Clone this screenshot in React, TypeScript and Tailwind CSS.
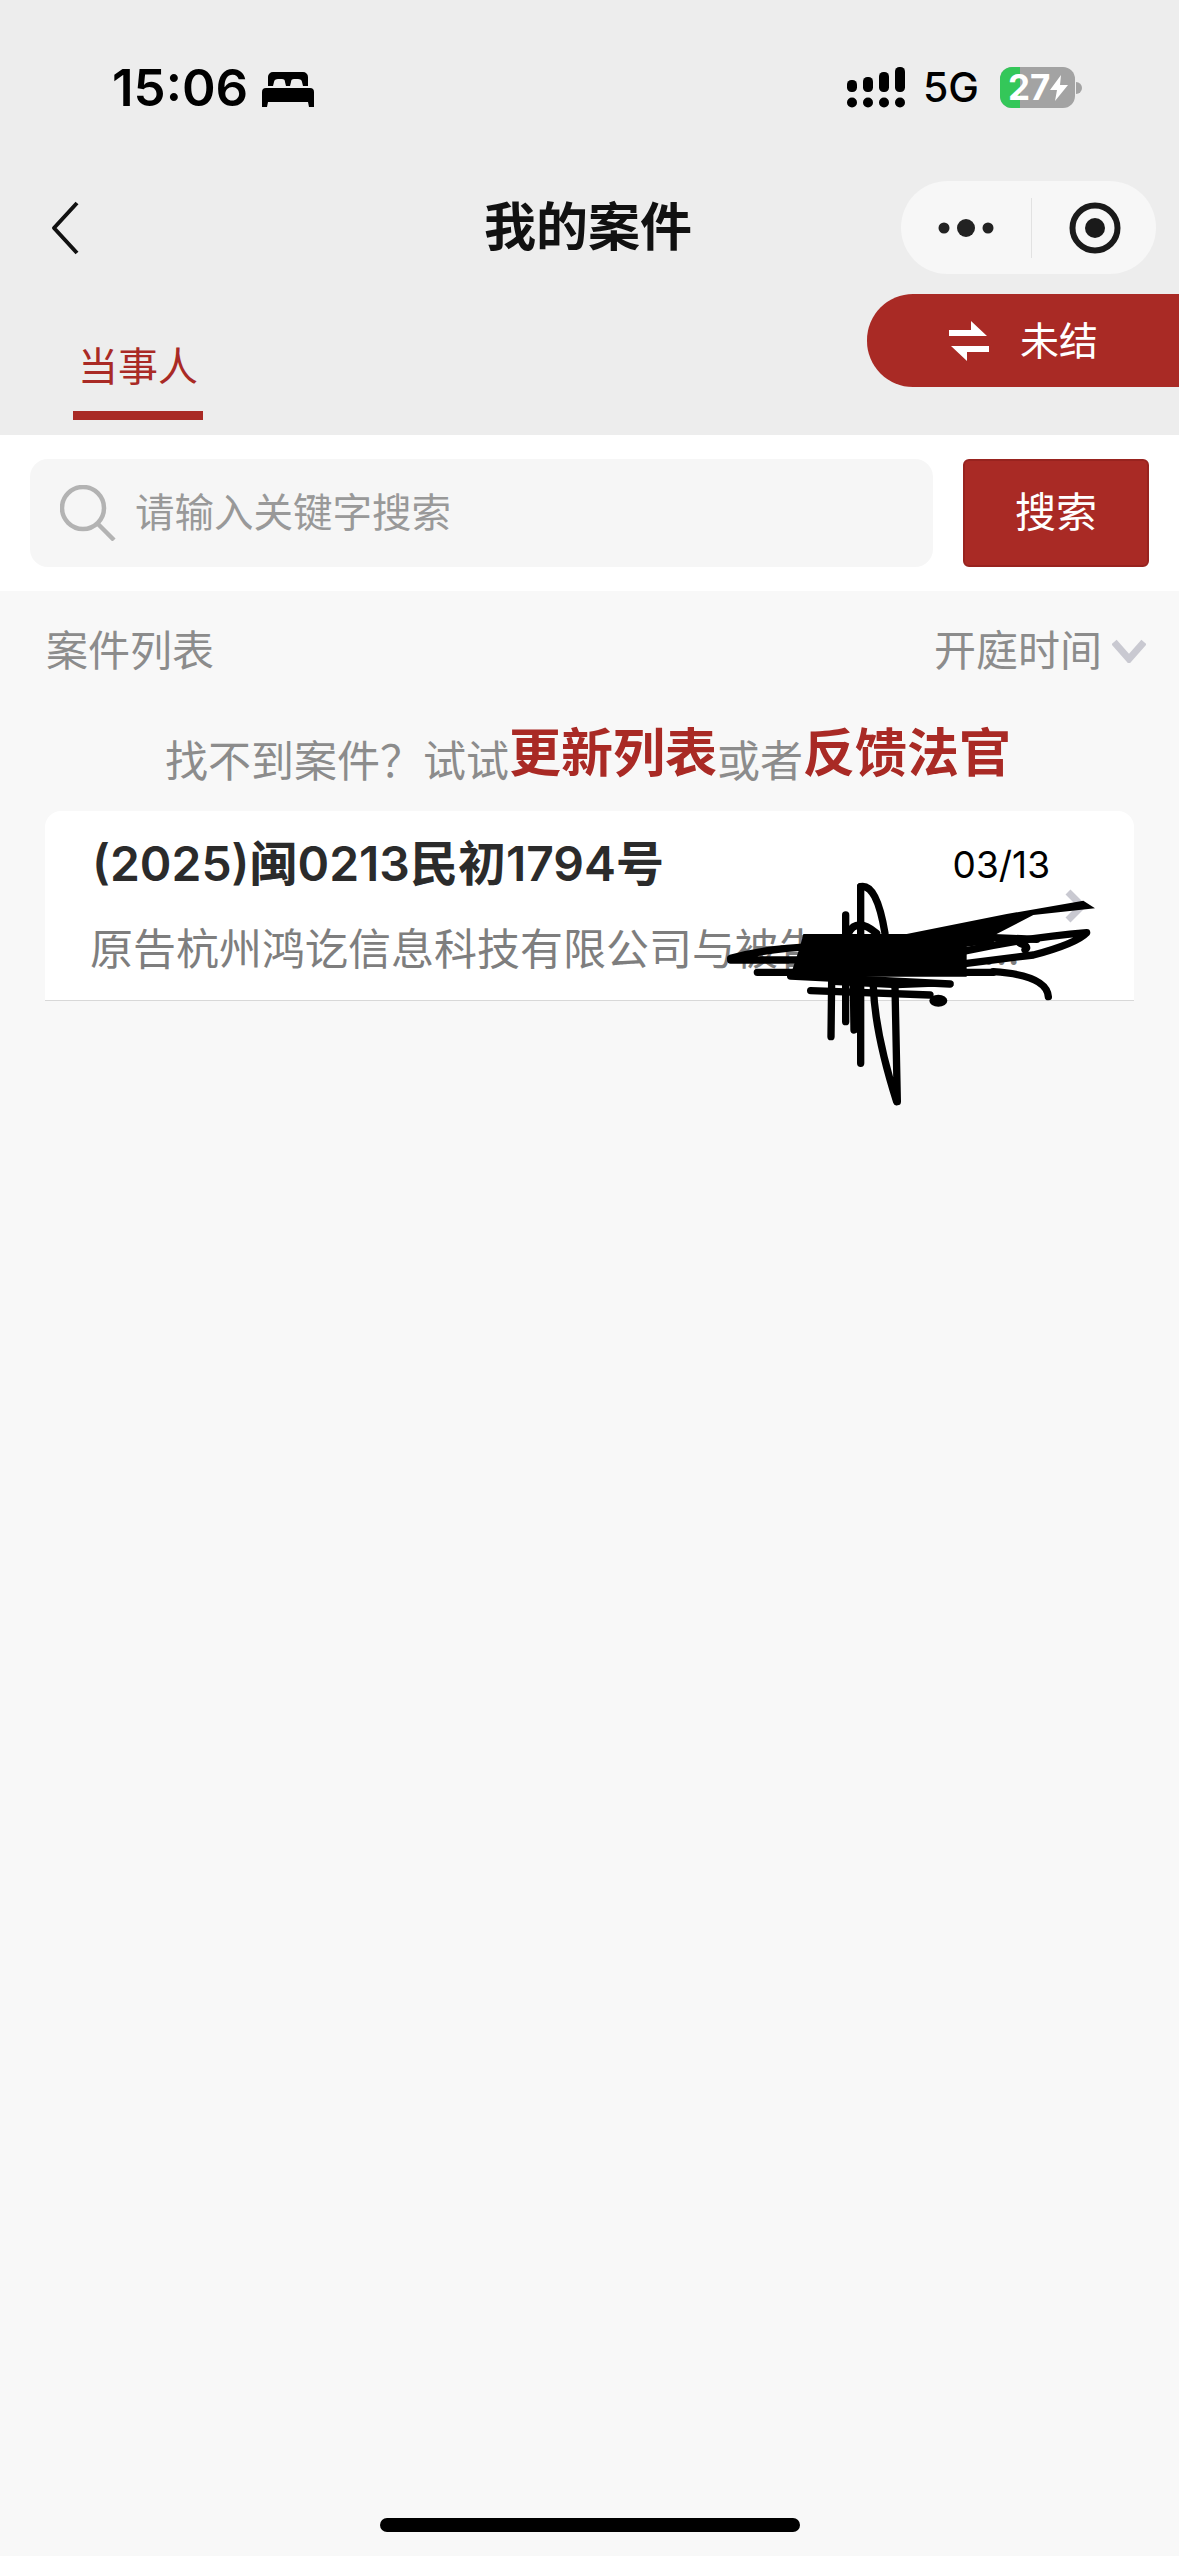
const CJK = "font-['Inter','Noto_Sans_CJK_SC',sans-serif]";

function BedIcon() {
  return (
    <svg width="52" height="36" viewBox="0 0 52 36" className="ml-[14px]">
      <path d="M6 14V5a5 5 0 0 1 5-5h30a5 5 0 0 1 5 5v9h-5l-1-4c0-2-2-3-4-3h-4c-2 0-3 1-3 3l-1 4h-4l-1-4c0-2-1-3-3-3h-4c-2 0-4 1-4 3l-1 4z" fill="#000" />
      <path d="M4 16h44a4 4 0 0 1 4 4v15h-5l-1-5H6l-1 5H0V20a4 4 0 0 1 4-4z" fill="#000" />
    </svg>
  );
}

function SignalIcon() {
  return (
    <svg width="58" height="41" viewBox="0 0 58 41">
      <rect x="0" y="13" width="10" height="12" rx="4.5" />
      <rect x="16" y="10" width="10" height="15" rx="4.5" />
      <rect x="32" y="5" width="10" height="20" rx="4.5" />
      <rect x="48" y="0" width="10" height="25" rx="4.5" />
      <circle cx="5" cy="35.5" r="5" />
      <circle cx="21" cy="35.5" r="5" />
      <circle cx="37" cy="35.5" r="5" />
      <circle cx="53" cy="35.5" r="5" />
    </svg>
  );
}

function Battery() {
  return (
    <div className="ml-[21px] flex items-center">
      <div className="relative flex h-[41px] w-[75px] items-center rounded-[12px] bg-[#a3a3a3] pl-[8px]">
        <div className="absolute inset-y-0 left-0 w-[20px] rounded-l-[12px] bg-[#34c759]" />
        <span className="relative text-[35px] leading-none font-bold text-white">27</span>
        <svg width="18" height="26" viewBox="0 0 18 26" className="relative">
          <path d="M11 0 0 15h7l-2 11L18 10h-8z" fill="#fff" />
        </svg>
      </div>
      <div className="ml-[1px] h-[12px] w-[6px] rounded-r-full bg-[#a3a3a3]" />
    </div>
  );
}

function StatusBar() {
  return (
    <div className="flex h-[108px] items-end pr-[97px] pl-[112px] text-black">
      <span className="text-[51px] leading-[40px] font-semibold">15:06</span>
      <BedIcon />
      <div className="ml-auto flex items-center">
        <SignalIcon />
        <span className="ml-[18px] text-[41px] leading-[41px] font-medium">5G</span>
        <Battery />
      </div>
    </div>
  );
}

function NavBar() {
  return (
    <div className="relative mt-[73px] flex h-[93px] items-center justify-center">
      <svg width="30" height="54" viewBox="0 0 30 54" fill="none" className="absolute top-[20px] left-[50px]">
        <path d="M27 2 4 27l23 25" stroke="#111" strokeWidth="4" strokeLinejoin="round" />
      </svg>
      <span className="mr-[3px] text-[52px] leading-none font-bold text-[#111]">我的案件</span>
      <div className="absolute top-0 right-[23px] flex h-[93px] w-[255px] items-center rounded-full bg-[#f7f7f7]">
        <svg width="56" height="20" viewBox="0 0 56 20" className="ml-[37px]">
          <circle cx="6" cy="10" r="5.5" fill="#222" />
          <circle cx="28" cy="10" r="9" fill="#222" />
          <circle cx="50" cy="10" r="5.5" fill="#222" />
        </svg>
        <div className="ml-[37px] h-[60px] w-px bg-[#e2e2e2]" />
        <svg width="52" height="52" viewBox="0 0 52 52" className="ml-[37px]" fill="none">
          <circle cx="26" cy="26" r="22.5" stroke="#1a1a1a" strokeWidth="6" />
          <circle cx="26" cy="26" r="10" fill="#1a1a1a" />
        </svg>
      </div>
    </div>
  );
}

function TabRow() {
  return (
    <div className="mt-[20px] flex h-[141px] items-start justify-between">
      <div className="mt-[50px] ml-[73px] flex w-[130px] flex-col items-center">
        <span className="text-[40px] leading-[46px] text-[#a92a25]">当事人</span>
        <div className="mt-[21px] h-[9px] w-full bg-[#a92a25]" />
      </div>
      <div className="flex h-[93px] w-[312px] items-center rounded-l-[46px] bg-[#a92a25] pl-[82px] text-white">
        <svg width="40" height="40" viewBox="0 0 40 40" fill="#fff">
          <path d="M22 0 38 15H0V9h22zM18 40 2 25h38v6H18z" />
        </svg>
        <span className="ml-[31px] text-[39px] leading-none">未结</span>
      </div>
    </div>
  );
}

function SearchBar() {
  return (
    <div className="flex h-[156px] items-center gap-[30px] bg-white pr-[30px] pl-[30px]">
      <div className="flex h-[108px] flex-1 items-center rounded-[18px] bg-[#f6f6f6] pl-[30px]">
        <svg width="56" height="56" viewBox="0 0 56 56" fill="none">
          <circle cx="23" cy="23" r="21" stroke="#b3b3b3" strokeWidth="4.5" />
          <path d="M37 38l17 17" stroke="#b3b3b3" strokeWidth="4.5" />
        </svg>
        <span className="ml-[19px] pt-[2px] text-[39.5px] text-[#999]">请输入关键字搜索</span>
      </div>
      <button className="h-[108px] w-[186px] rounded-[6px] border-2 border-[#98231f] bg-[#a92a25] text-[41px] text-white">
        搜索
      </button>
    </div>
  );
}

function ListHeader() {
  return (
    <div className="flex h-[85px] items-end justify-between pr-[33px] pl-[46px] text-[42px] leading-[50px] text-[#8c8c8c]">
      <span>案件列表</span>
      <div className="flex items-center">
        <span>开庭时间</span>
        <svg width="34" height="24" viewBox="0 0 34 24" fill="none" className="ml-[10px]">
          <path d="M2 3l15 17L32 3" stroke="#c9c9d1" strokeWidth="7" />
        </svg>
      </div>
    </div>
  );
}

function Hint() {
  return (
    <div className="mt-[48px] flex items-baseline justify-center pr-[3px] text-[43px] leading-[60px] text-[#8c8c8c]">
      <span className="translate-y-[5px]">找不到案件？试试</span>
      <span className="text-[52px] font-bold text-[#a92a25]">更新列表</span>
      <span className="translate-y-[5px]">或者</span>
      <span className="text-[52px] font-bold text-[#a92a25]">反馈法官</span>
    </div>
  );
}

// the black marks someone drew by hand over the card
function Scribble() {
  return (
    <svg width="479" height="340" viewBox="0 0 1437 1020" fill="none" className="absolute top-[780px] left-[700px]">
      <g stroke="#000" strokeWidth="22" strokeLinecap="round" strokeLinejoin="round">
        <path d="M92 535Q200 505 340 500M92 540L420 540" />
        <path d="M172 577L880 577M272 588L750 612M332 632L690 645" />
        <path d="M800 512Q1000 470 1160 458Q1130 490 1000 525L800 550" />
        <path d="M880 575Q1040 585 1045 650M960 490Q990 500 975 510M810 470L1010 478" />
        <path d="M395 600L393 770M437 405L437 725M460 600L462 750M482 320L482 850" />
        <path d="M482 320Q530 310 555 460M445 460Q470 410 530 460" />
        <path d="M520 620Q525 760 590 965M585 620L592 965" />
      </g>
      <ellipse cx="715" cy="662" rx="27" ry="18" fill="#000" />
      <path d="M620 462 920 402 1150 362 1185 385 1000 405 890 462z" fill="#000" />
      <path d="M310 462H890L880 490 800 500V590H270L300 500z" fill="#000" />
      <path d="M400 590 760 605V618L590 625 400 615z" fill="#000" />
    </svg>
  );
}

function CaseCard() {
  return (
    <div className="mx-[45px] mt-[25px] h-[190px] rounded-t-[16px] border-b border-[#d8d8d8] bg-white pt-[23px] pr-[49px] pl-[45px]">
      <div className="flex items-start justify-between">
        <span className="ml-[2px] text-[48px] leading-[60px] font-semibold text-[#2b2b2b]">(2025)闽0213民初1794号</span>
        <span className="mt-[9px] mr-[35px] text-[37px] leading-[44px] text-black">03/13</span>
      </div>
      <div className="relative mt-[25px] flex h-[60px] items-center justify-between pr-[65px] text-[43px] leading-[60px] text-[#7e7e7e]">
        <span>原告杭州鸿讫信息科技有限公司与被告</span>
        <span>...</span>
        <svg width="20" height="34" viewBox="0 0 20 34" fill="none" className="absolute top-[-30px] right-0">
          <path d="M3 3l14 14L3 31" stroke="#c9c9d1" strokeWidth="7" />
        </svg>
      </div>
    </div>
  );
}

export default function App() {
  return (
    <div className={`relative flex h-[2556px] w-[1179px] flex-col overflow-hidden bg-[#f8f8f8] ${CJK}`}>
      <div className="h-[435px] shrink-0 bg-[#ededed]">
        <StatusBar />
        <NavBar />
        <TabRow />
      </div>
      <SearchBar />
      <ListHeader />
      <Hint />
      <CaseCard />
      <Scribble />
      <div className="mx-auto mt-auto mb-[24px] h-[14px] w-[420px] rounded-full bg-black" />
    </div>
  );
}
